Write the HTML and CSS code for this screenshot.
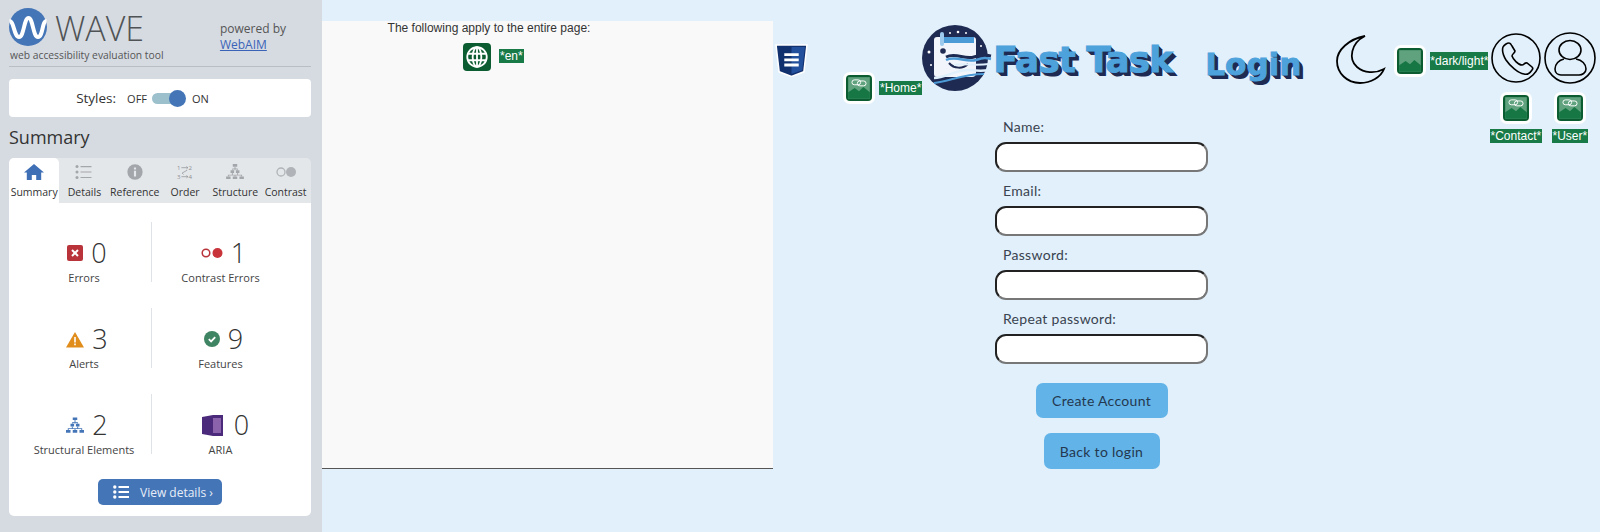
FILE: index.html
```html
<!DOCTYPE html>
<html lang="en">
<head>
<meta charset="utf-8">
<title>Fast Task</title>
<link rel="stylesheet" href="styles.css">
</head>
<body>
<aside class="wave">
  <header class="wave-head">
    <div class="brand">
      <div class="brand-row">
        <svg class="wave-logo" viewBox="0 0 38 38"><circle cx="19" cy="19" r="19" fill="#4475b7"/><path d="M0.500 13C5 13 5 29 10 29S15 10 19.500 10 24 29 29 29 33 13 37.500 13" fill="none" stroke="#fff" stroke-width="4"/></svg>
        <span class="wave-name">WAVE</span>
      </div>
      <div class="tagline">web accessibility evaluation tool</div>
    </div>
    <div class="powered">powered by<br><a href="#">WebAIM</a></div>
  </header>
  <div class="styles-card">
    <span class="styles-label">Styles:</span>
    <span class="styles-opt">OFF</span>
    <span class="toggle"><span class="toggle-knob"></span></span>
    <span class="styles-opt">ON</span>
  </div>
  <h2 class="summary-title">Summary</h2>
  <nav class="tabs">
    <div class="tab tab-active">
      <svg viewBox="0 0 22 16"><path d="M11 0 1 8.500h2.800V16h5v-5h4.400v5h5V8.500H21z" fill="#3f6fb5"/></svg>
      <span>Summary</span>
    </div>
    <div class="tab">
      <svg viewBox="0 0 22 16" fill="#a3a6aa"><circle cx="4" cy="2.500" r="1.500"/><circle cx="4" cy="8" r="1.500"/><circle cx="4" cy="13.500" r="1.500"/><path d="M7.500 2h11v1.200h-11zM7.500 7.400h11v1.200h-11zM7.500 12.900h11v1.200h-11z"/></svg>
      <span>Details</span>
    </div>
    <div class="tab">
      <svg viewBox="0 0 22 18"><circle cx="11" cy="9" r="8.600" fill="#a3a6aa"/><path d="M9.800 7.500h2.400V14H9.800zM9.800 4h2.400v2.200H9.800z" fill="#e4e7eb"/></svg>
      <span>Reference</span>
    </div>
    <div class="tab">
      <svg class="order-icon" viewBox="0 -3 22 25"><path d="M6 3.500h9M13 1.800l2 1.700-2 1.700M14 7 7 11l2 2M6 16h9M13 14.300l2 1.700-2 1.700" fill="none" stroke="#8e9195" stroke-width="1"/><text x="0" y="6.200" class="order-num">1</text><text x="16" y="6.200" class="order-num">2</text><text x="0" y="19" class="order-num">3</text><text x="16" y="19" class="order-num">4</text></svg>
      <span>Order</span>
    </div>
    <div class="tab">
      <svg viewBox="0 0 20 18" fill="#a3a6aa"><path d="M7.500 0h5v3h-5zM5 7h4v3H5zM11 7h4v3h-4zM0 14h5v3H0zM7.500 14h5v3h-5zM15 14h5v3h-5z"/><path d="M9.500 3h1v4h-1zM7 5h6v2h-1V6H8v1H7zM2 12h16v2h-1v-1H3v1H2zM6.500 10h1v2h-1zM12.500 10h1v2h-1zM9.500 12h1v2h-1z"/></svg>
      <span>Structure</span>
    </div>
    <div class="tab">
      <svg viewBox="0 0 22 16"><circle cx="6" cy="8" r="4" fill="none" stroke="#b0b3b7" stroke-width="1.300"/><circle cx="16" cy="8" r="5" fill="#b0b3b7"/></svg>
      <span>Contrast</span>
    </div>
  </nav>
  <section class="stats">
    <div class="stat-grid">
      <div class="stat">
        <div class="stat-top"><svg viewBox="0 0 16 16"><rect width="16" height="16" rx="2" fill="#b8343a"/><path d="m5 5 6 6M11 5l-6 6" stroke="#fff" stroke-width="2"/></svg><b>0</b></div>
        <div class="stat-label">Errors</div>
      </div>
      <div class="stat stat-right">
        <div class="stat-top"><svg class="wide" viewBox="0 0 22 12"><circle cx="5" cy="6" r="3.800" fill="none" stroke="#b8343a" stroke-width="1.500"/><circle cx="16.500" cy="6" r="5" fill="#c8343a"/></svg><b>1</b></div>
        <div class="stat-label">Contrast Errors</div>
      </div>
      <div class="stat">
        <div class="stat-top"><svg class="alert" viewBox="0 0 18 16"><path d="M9 .5 18 16H0z" fill="#e08d1c"/><path d="M8.200 5.500h1.600v5.500H8.200zM8.200 12h1.600v1.800H8.200z" fill="#fff"/></svg><b>3</b></div>
        <div class="stat-label">Alerts</div>
      </div>
      <div class="stat stat-right">
        <div class="stat-top"><svg viewBox="0 0 16 16"><circle cx="8" cy="8" r="8" fill="#3f8463"/><path d="m4.800 8.200 2.300 2.200 4.100-4.200" fill="none" stroke="#fff" stroke-width="1.800"/></svg><b>9</b></div>
        <div class="stat-label">Features</div>
      </div>
      <div class="stat">
        <div class="stat-top"><svg class="alert" viewBox="0 0 20 18" fill="#4475b7"><path d="M7.500 0h5v3h-5zM5 7h4v3H5zM11 7h4v3h-4zM0 14h5v3H0zM7.500 14h5v3h-5zM15 14h5v3h-5z"/><path d="M9.500 3h1v4h-1zM7 5h6v2h-1V6H8v1H7zM2 12h16v2h-1v-1H3v1H2zM6.500 10h1v2h-1zM12.500 10h1v2h-1zM9.500 12h1v2h-1z"/></svg><b>2</b></div>
        <div class="stat-label">Structural Elements</div>
      </div>
      <div class="stat stat-right">
        <div class="stat-top stat-top-aria"><svg class="aria" viewBox="0 0 21 21"><path d="M0 2 11 0h10v21H11L0 19z" fill="#4b2a7c"/><path d="M11 3h8v15h-8z" fill="#8b63ad"/></svg><b>0</b></div>
        <div class="stat-label">ARIA</div>
      </div>
    </div>
    <button class="details-btn" type="button">
      <svg viewBox="0 0 16 14" fill="#fff"><circle cx="1.800" cy="2" r="1.700"/><circle cx="1.800" cy="7" r="1.700"/><circle cx="1.800" cy="12" r="1.700"/><path d="M5.500 1h10.500v2H5.500zM5.500 6h10.500v2H5.500zM5.500 11h10.500v2H5.500z"/></svg>
      <span>View details ›</span>
    </button>
  </section>
</aside>

<main class="page">
  <section class="page-panel">
    <p class="apply">The following apply to the entire page:</p>
    <div class="lang-row">
      <span class="badge badge-plain">
        <svg viewBox="0 0 24 24" fill="none" stroke="#fff" stroke-width="1.700"><circle cx="12" cy="12" r="9"/><ellipse cx="12" cy="12" rx="4" ry="9"/><path d="M3.500 9h17M3.500 15h17M12 3v18"/></svg>
      </span>
      <span class="tag tag-en">*en*</span>
    </div>
  </section>

  <section class="site">
    <header class="site-head">
      <svg class="css-icon" viewBox="0 0 32 32"><path d="M1 1h30l-3 26-12 4.500L4 27z" fill="#11306e" stroke="#fff" stroke-width="1.500"/><path d="M16 3h13l-2.600 22.500L16 29z" fill="#23509c"/><path d="M9 9h14v2.700H9zM9 14h14v2.700H9zM9 19h14v2.700H9z" fill="#fff"/></svg>
      <div class="home-note">
        <span class="badge">
          <svg viewBox="0 0 24 24"><rect x="2" y="2" width="20" height="20" fill="#5fa27d"/><path d="M2 22v-6l6-4 4 3 4-4 6 5v6z" fill="#177744"/><rect x="5.500" y="4.500" width="8" height="4.500" rx="2.200" fill="none" stroke="#fff" stroke-width=".9"/><rect x="10.500" y="5.500" width="8" height="4.500" rx="2.200" fill="none" stroke="#fff" stroke-width=".9"/></svg>
        </span>
        <span class="tag">*Home*</span>
      </div>
      <svg class="logo" viewBox="0 0 70 68">
        <circle cx="33" cy="34" r="33" fill="#1f2a52"/>
        <path d="M15 13h36a3 3 0 0 1 3 3v33a4 4 0 0 1-4 4H15a3 3 0 0 1-3-3V16a3 3 0 0 1 3-3z" fill="#f1f5fb"/>
        <rect x="22" y="13" width="30" height="6" fill="#4c9ad6"/>
        <rect x="18" y="8" width="4" height="14" rx="2" fill="#9cc9ec"/>
        <circle cx="21" cy="27" r="2.800" fill="#1f2a52"/>
        <path d="M27 39c5 6 14 6 19 1" fill="none" stroke="#1f2a52" stroke-width="2"/>
        <path d="M24 33c10-5 18 3 28 0s12-2 17-1" fill="none" stroke="#1f2a52" stroke-width="3"/>
        <path d="M24 36c10-5 20 3 30 0s10-2 15-1" fill="none" stroke="#4c9ad6" stroke-width="2.500"/>
        <path d="M32 41c8-2 20 1 35-1" fill="none" stroke="#dfeffb" stroke-width="2"/>
        <path d="M12 54c12 0 22-9 36-8 8 1 14 1 19 0" fill="none" stroke="#dfeffb" stroke-width="2.500"/>
        <path d="M12 59c14-1 28-9 50-9" fill="none" stroke="#4c9ad6" stroke-width="2"/>
        <circle cx="7" cy="28" r="1.500" fill="#fff"/><circle cx="28" cy="9" r="1" fill="#fff"/><circle cx="36" cy="8" r="1.300" fill="#fff"/><circle cx="44" cy="9" r="1" fill="#fff"/><circle cx="9" cy="41" r="1" fill="#fff"/><circle cx="59" cy="22" r="1" fill="#fff"/>
      </svg>
      <h1 class="site-name">Fast Task</h1>
      <div class="login-word">Login</div>
      <svg class="moon" viewBox="-1 0 50 50"><path d="M28 1C12 4 0 15 0 26 0 38 10 48 23 48c11 0 21-6 24-14-9 5-20 4-27-2C11 24 14 8 28 1z" fill="none" stroke="#000" stroke-width="1.800"/></svg>
      <div class="dark-note">
        <span class="badge"><svg viewBox="0 0 24 24"><rect x="2" y="2" width="20" height="20" fill="#5fa27d"/><path d="M2 22v-6l6-4 4 3 4-4 6 5v6z" fill="#177744"/></svg></span>
        <span class="tag tag-tall">*dark/light*</span>
      </div>
      <div class="nav-item nav-contact">
        <svg class="round" viewBox="0 0 50 50" fill="none" stroke="#000" stroke-width="1.600"><circle cx="25" cy="25" r="24"/><path d="M12 14c1-2 4-4 6-4 1 0 2 1 3 3l3 5c0 2-3 3-3 5 1 3 6 9 10 9 2 0 3-3 5-2l5 4c1 1 1 2 0 3-2 3-5 5-8 4-6-1-14-8-18-14-3-5-4-10-3-13z"/></svg>
        <span class="badge"><svg viewBox="0 0 24 24"><rect x="2" y="2" width="20" height="20" fill="#5fa27d"/><path d="M2 22v-6l6-4 4 3 4-4 6 5v6z" fill="#177744"/><rect x="5.500" y="4.500" width="8" height="4.500" rx="2.200" fill="none" stroke="#fff" stroke-width=".9"/><rect x="10.500" y="5.500" width="8" height="4.500" rx="2.200" fill="none" stroke="#fff" stroke-width=".9"/></svg></span>
        <span class="tag">*Contact*</span>
      </div>
      <div class="nav-item nav-user">
        <svg class="round round-lg" viewBox="0 0 52 52" fill="none" stroke="#000" stroke-width="1.600"><circle cx="26" cy="26" r="25"/><ellipse cx="26" cy="18" rx="11" ry="9.500"/><path d="M20 27c-5 1-9 5-9 10 0 4 3 6 6 6h18c3 0 7-2 7-6 0-5-4-9-10-10"/></svg>
        <span class="badge"><svg viewBox="0 0 24 24"><rect x="2" y="2" width="20" height="20" fill="#5fa27d"/><path d="M2 22v-6l6-4 4 3 4-4 6 5v6z" fill="#177744"/><rect x="5.500" y="4.500" width="8" height="4.500" rx="2.200" fill="none" stroke="#fff" stroke-width=".9"/><rect x="10.500" y="5.500" width="8" height="4.500" rx="2.200" fill="none" stroke="#fff" stroke-width=".9"/></svg></span>
        <span class="tag">*User*</span>
      </div>
    </header>

    <form class="signup">
      <label class="field-label" for="f-name">Name:</label>
      <input class="field" id="f-name" type="text">
      <label class="field-label" for="f-email">Email:</label>
      <input class="field" id="f-email" type="text">
      <label class="field-label" for="f-pass">Password:</label>
      <input class="field" id="f-pass" type="password">
      <label class="field-label" for="f-rep">Repeat password:</label>
      <input class="field" id="f-rep" type="password">
      <button class="action action-create" type="button">Create Account</button>
      <button class="action action-back" type="button">Back to login</button>
    </form>
  </section>
</main>
</body>
</html>
```
FILE: styles.css
```css
* { box-sizing: border-box; }
html, body { margin: 0; height: 532px; overflow: hidden; }
body { display: flex; font-family: "Open Sans", sans-serif; color: #333; background: #e1f0fb; }

/* WAVE sidebar */
.wave { width: 322px; height: 532px; flex: none; padding: 8px 9px 0; background: #d6dbe2; }
.wave-head { display: flex; justify-content: space-between; width: 302px; height: 59px; padding-right: 25px; border-bottom: 1px solid #b9bec6; }
.brand-row { display: flex; align-items: flex-start; height: 38px; }
.wave-logo { width: 38px; height: 38px; flex: none; }
.wave-name { font-weight: 300; font-size: 34px; line-height: 38px; margin: 1px 0 0 8px; color: #505355; }
.tagline { font-size: 10.300px; line-height: 14px; margin: 2px 0 0 1px; color: #555; }
.powered { font-size: 12px; line-height: 16px; margin-top: 13px; color: #555; }
.powered a { color: #3a63b8; }
.styles-card { display: flex; align-items: center; justify-content: center; width: 302px; height: 38px; margin-top: 12px; padding-right: 35px; background: #fff; border-radius: 4px; }
.styles-label { font-size: 13.500px; margin-right: 11px; }
.styles-opt { font-size: 11px; }
.toggle { position: relative; width: 28px; height: 11px; margin: 0 12px 0 5px; border-radius: 6px; background: #9cc0cc; }
.toggle-knob { position: absolute; right: -6px; top: -3px; width: 17px; height: 17px; border-radius: 50%; background: #4475b7; }
.summary-title { margin: 6px 0 0; font-weight: 400; font-size: 18px; line-height: 29px; color: #333; }
.tabs { display: flex; width: 302px; height: 45px; margin-top: 6px; background: #e4e7ea; border-radius: 5px 5px 0 0; }
.tab { width: 50.300px; display: flex; flex-direction: column; align-items: center; padding-top: 6px; font-size: 10.500px; color: #333; white-space: nowrap; }
.tab svg { width: 22px; height: 16px; margin-bottom: 5px; flex: none; }
.tab svg.order-icon { height: 18px; margin: -1px 0 4px; }
.tab-active { background: #fff; border-radius: 5px 5px 0 0; }
.order-num { font-size: 8.500px; fill: #8e9195; font-family: "Open Sans", sans-serif; }

.stats { width: 302px; height: 313px; background: #fff; border-radius: 0 0 5px 5px; display: flex; flex-direction: column; align-items: center; padding-top: 19px; }
.stat-grid { display: grid; grid-template-columns: 142px 160px; grid-auto-rows: 60px; row-gap: 26px; width: 302px; }
.stat { display: flex; flex-direction: column; align-items: center; padding: 16px 0 0 8px; }
.stat-right { border-left: 1px solid #dfe2e6; padding: 16px 22px 0 0; }
.stat-top { display: flex; align-items: center; gap: 8px; height: 30px; flex: none; margin-left: 6px; }
.stat-top svg { width: 16px; height: 16px; }
.stat-top svg.wide { width: 22px; height: 12px; }
.stat-top svg.alert { width: 18px; height: 17px; }
.stat-top svg.aria { width: 21px; height: 21px; }
.stat-top-aria { gap: 11px; margin-left: 10px; }
.stat-top b { font-weight: 300; font-size: 27px; line-height: 30px; color: #333; }
.stat-label { margin-top: 1px; font-size: 11px; line-height: 18px; color: #444; white-space: nowrap; }
.details-btn { display: flex; align-items: center; gap: 11px; width: 124px; height: 26px; margin-top: 25px; padding: 0 0 0 15px; border: 0; border-radius: 5px; background: #4475b7; color: #e8eef7; font: 12px "Open Sans", sans-serif; }
.details-btn svg { width: 16px; height: 14px; }

/* Analysed page */
.page { flex: 1; display: flex; height: 532px; min-width: 0; }
.page-panel { width: 451px; height: 448px; flex: none; margin-top: 21px; background: #f9f9f9; border-bottom: 1px solid #555; }
.apply { margin: 0; text-align: center; font: 12px/14px "Liberation Sans", sans-serif; color: #333; width: 334px; }
.lang-row { display: flex; align-items: center; margin: 8px 0 0 141px; gap: 8px; }

.badge { width: 32px; height: 32px; flex: none; display: block; padding: 3px; border-radius: 7px; background: #fff; }
.badge svg { display: block; width: 26px; height: 26px; border-radius: 4px; background: #0b5c30; }
.badge-plain { background: #0b5c30; padding: 1px; width: 28px; height: 28px; border-radius: 4px; }
.badge-plain svg { width: 26px; height: 26px; }
.tag { background: #187a47; color: #fff; font: 12px/14px "Liberation Sans", sans-serif; padding: 0 1px; white-space: nowrap; }
.tag-tall { padding: 2px 0; }
.tag-en { margin-bottom: 2px; }

/* Fast Task site */
.site { flex: 1; min-width: 0; display: flex; flex-direction: column; }
.site-head { display: flex; align-items: flex-start; height: 117px; flex: none; }
.css-icon { width: 33px; height: 33px; flex: none; margin: 44px 0 0 2px; }
.home-note { display: flex; align-items: center; gap: 4px; margin: 72px 0 0 35px; flex: none; }
.logo { width: 70px; height: 68px; flex: none; margin-top: 24px; }
.site-name, .login-word { margin: 0; font-family: "DejaVu Sans", sans-serif; font-weight: 700; color: #4da2dc; -webkit-text-stroke: 1px #4da2dc; text-shadow: 1px 1px 0 #1f2a52, 2px 2px 0 #1f2a52, 3px 3px 0 #1f2a52, 4px 4px 0 #1f2a52; white-space: nowrap; }
.site-name { font-size: 36px; line-height: 44px; margin: 38px 0 0 1px; width: 212px; flex: none; letter-spacing: -1px; }
.login-word { font-size: 31px; line-height: 40px; margin-top: 44px; width: 131px; flex: none; letter-spacing: 0; }
.moon { width: 50px; height: 50px; flex: none; margin-top: 35px; }
.dark-note { display: flex; align-items: center; gap: 4px; margin: 45px 0 0 8px; flex: none; width: 95px; }
.nav-item { display: flex; flex-direction: column; align-items: center; flex: none; }
.nav-contact { width: 53px; margin-top: 33px; }
.nav-user { width: 53px; margin-top: 32px; margin-left: 1px; }
.round { width: 50px; height: 50px; flex: none; }
.round-lg { width: 52px; height: 52px; }
.nav-contact .badge { margin-top: 9px; }
.nav-user .badge { margin-top: 8px; }
.nav-item .tag { margin-top: 5px; }

.signup { display: flex; flex-direction: column; align-items: flex-start; width: 213px; margin: 0 0 0 222px; font-family: Lato, sans-serif; }
.field-label { height: 20px; line-height: 20px; margin: 0 0 5px 8px; font-size: 14px; color: #3a4350; letter-spacing: .3px; }
.field { width: 213px; height: 30px; margin: 0 0 9px; padding: 0; background: #fff; border: 2px solid; border-color: #222 #777 #777 #222; border-radius: 11px; }
.action { align-self: center; border: 0; border-radius: 7px; background: #62b3e8; color: #24384f; font: 14px Lato, sans-serif; letter-spacing: .3px; }
.action-create { width: 132px; height: 35px; margin-top: 10px; }
.action-back { width: 116px; height: 36px; margin-top: 15px; }
```
